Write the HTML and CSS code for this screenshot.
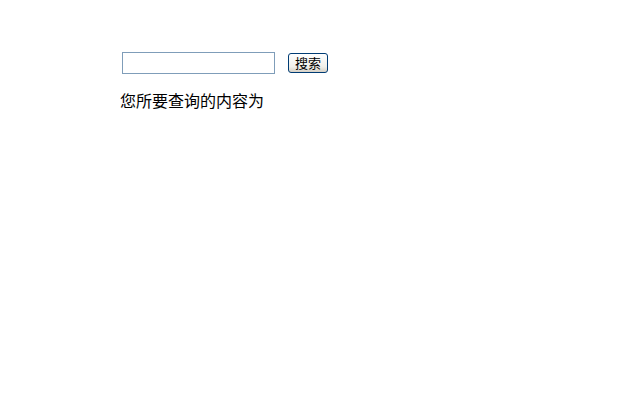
FILE: index.html
```html
<!DOCTYPE html>
<html lang="zh-CN">
  <head>
    <meta charset="UTF-8" />
    <title>搜索</title>
    <link rel="stylesheet" href="styles.css">
  </head>
  <body>
    <div class="page">
      <form class="search">
        <input class="search-input" type="text" name="q" />
        <button class="search-btn" type="button">搜索</button>
      </form>
      <p class="result">您所要查询的内容为</p>
    </div>
  </body>
</html>
```

FILE: styles.css
```css
* {
  box-sizing: border-box;
}
body {
  margin: 0;
  background: #fff;
  color: #000;
  font-family: "Noto Sans CJK SC", "Liberation Sans", sans-serif;
}

.page {
  padding: 52px 0 0 120px;
}

.search {
  display: flex;
  align-items: center;
  gap: 13px;
  margin: 0 0 0 2px;
}
.search-input {
  width: 153px;
  height: 22px;
  margin: 0;
  padding: 1px 3px;
  border: 1px solid #7f9db9;
  background: #fff;
  font-size: 13px;
  outline: none;
}
.search-btn {
  width: 40px;
  height: 20px;
  margin: 0;
  padding: 0;
  border: 1px solid #003c74;
  border-radius: 3px;
  background: linear-gradient(#ffffff, #f0f0ea 70%, #d6d0c5);
  color: #000;
  font-family: "Noto Sans CJK SC", sans-serif;
  font-size: 13px;
  line-height: 18px;
}

.result {
  margin: 16px 0 0;
  font-size: 16px;
  line-height: 20px;
}
```
